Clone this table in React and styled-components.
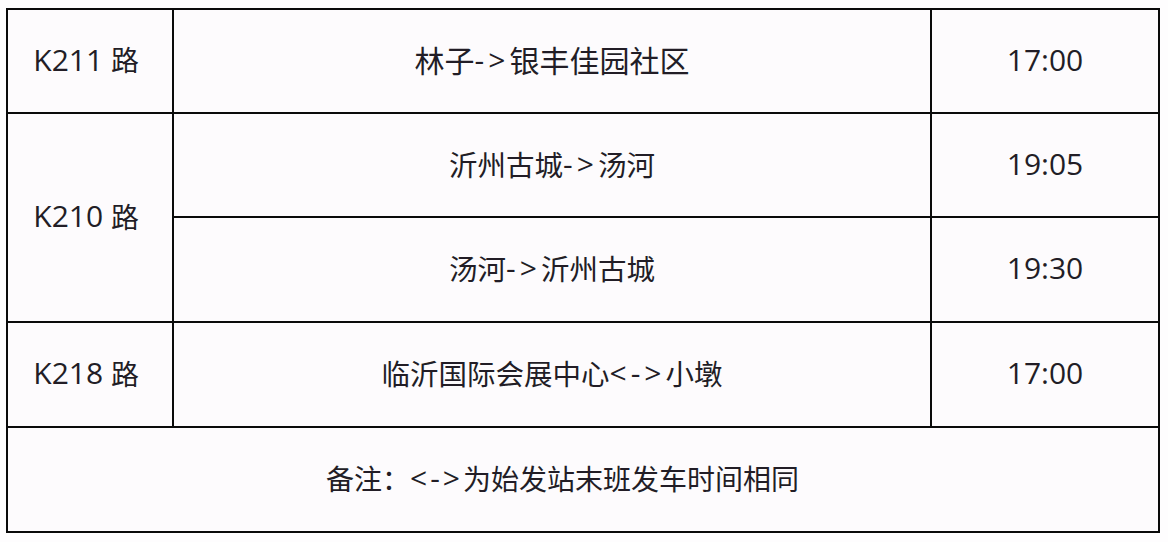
import React from 'react'
import styled, { createGlobalStyle } from 'styled-components'

const GlobalStyle = createGlobalStyle`
    body {
        margin: 0;
        background: #fefdfe;
        font-family: "Noto Sans CJK SC", "Open Sans", sans-serif;
    }
`

const Page = styled.div`
    padding: 8px 0 0 6px;
`

const Table = styled.div`
    display: grid;
    grid-template-columns: 166px 758px 228px;
    grid-template-rows: 104px 104px 105px 105px 105px;
    width: 1152px;
    border-left: 2px solid #0a0a0a;
    border-top: 2px solid #0a0a0a;
    background: #fdfbfd;
`

const Cell = styled.div`
    display: flex;
    align-items: center;
    justify-content: center;
    padding: 0 ${props => props.shift || '0px'} 4px 0;
    border-right: 2px solid #0a0a0a;
    border-bottom: 2px solid #0a0a0a;
    grid-row: ${props => props.rows || 'auto'};
    grid-column: ${props => props.cols || 'auto'};
    color: #221d26;
    font-size: ${props => props.size || '27.5px'};
    white-space: pre;
`

// latin runs are set a bit wider than the CJK text, like the original table
const Latin = styled.span`
    font-family: "Open Sans", sans-serif;
    font-size: 30px;
    letter-spacing: ${props => props.spread || '0px'};
`

const Mixed = ({ text, spread }) =>
    text.split(/([\x20-\x7e]+)/).filter(Boolean).map((part, i) =>
        /^[\x20-\x7e]+$/.test(part)
            ? <Latin key={i} spread={spread}>{part}</Latin>
            : <span key={i}>{part}</span>
    )

const routes = [
    { name: 'K211 路', trips: [{ line: '林子->银丰佳园社区', time: '17:00', size: '30px' }] },
    {
        name: 'K210 路',
        trips: [
            { line: '沂州古城->汤河', time: '19:05', size: '28.5px' },
            { line: '汤河->沂州古城', time: '19:30', size: '28.5px' }
        ]
    },
    { name: 'K218 路', trips: [{ line: '临沂国际会展中心<->小墩', time: '17:00', size: '28.5px' }] }
]

export default function App() {
    return (
        <Page>
            <GlobalStyle />
            <Table>
                {routes.map(r => (
                    <React.Fragment key={r.name}>
                        <Cell rows={`span ${r.trips.length}`} size="28px"><Mixed text={r.name + ' '} /></Cell>
                        {r.trips.map(t => (
                            <React.Fragment key={t.line}>
                                <Cell size={t.size}><Mixed text={t.line} spread="4px" /></Cell>
                                <Cell><Mixed text={t.time} /></Cell>
                            </React.Fragment>
                        ))}
                    </React.Fragment>
                ))}
                <Cell cols="1 / span 3" size="28px" shift="41px">
                    <Mixed text="备注：<->为始发站末班发车时间相同" spread="3px" />
                </Cell>
            </Table>
        </Page>
    )
}
